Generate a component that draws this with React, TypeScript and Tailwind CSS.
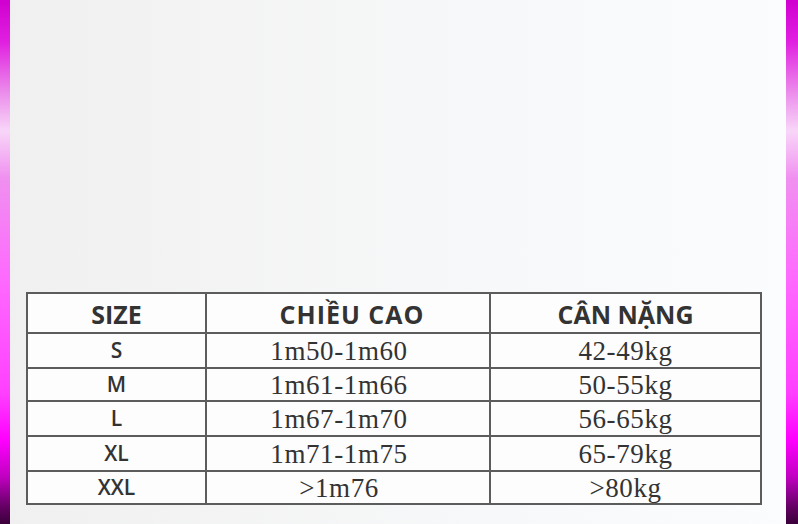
import React from "react";

const rows = [
  { s: "S", h: "1m50-1m60", w: "42-49kg", hh: "h-[33px]" },
  { s: "M", h: "1m61-1m66", w: "50-55kg", hh: "h-[31px]" },
  { s: "L", h: "1m67-1m70", w: "56-65kg", hh: "h-[33px]" },
  { s: "XL", h: "1m71-1m75", w: "65-79kg", hh: "h-[33px]" },
  { s: "XXL", h: ">1m76", w: ">80kg", hh: "h-[31px]" },
];

const barBg =
  "bg-[linear-gradient(to_bottom,#d000d0_0%,#e020e0_8%,#ec90ec_18%,#f8d6f8_25%,#f090f0_34%,#ff66ff_55%,#ff40ff_75%,#ff00ff_84%,#c000c0_91%,#600060_97%,#3a003a_100%)]";

export default function App() {
  return (
    <div className="flex w-[798px] h-[524px] overflow-hidden bg-[linear-gradient(to_right,#f0f0f0,#f7f8f9_60%,#fbfcfd)]">
      <div className={`w-[10px] h-full ${barBg}`} />
      <div className="flex-1 pl-[16px] pr-[24px] pt-[292px]">
        <div className="border-2 border-[#5c5c5c] bg-[#fdfdfd]">
          <div className="flex h-[38px] text-[#333] font-bold text-[25px] font-['Open_Sans',sans-serif] leading-none">
            <div className="w-[177px] flex items-center justify-center pt-[3px]">SIZE</div>
            <div className="w-[284px] border-l-2 border-[#5c5c5c] flex items-center justify-center pl-[8px] pt-[3px] tracking-[1px]">CHIỀU CAO</div>
            <div className="flex-1 border-l-2 border-[#5c5c5c] flex items-center justify-center pt-[3px]">CÂN NẶNG</div>
          </div>
          {rows.map((r) => (
            <div key={r.s} className={`flex ${r.hh} box-content border-t-2 border-[#5c5c5c] text-[#333] leading-none`}>
              <div className="w-[177px] flex items-center justify-center font-['Open_Sans',sans-serif] font-semibold text-[21px]">
                {r.s}
              </div>
              <div className="w-[284px] border-l-2 border-[#5c5c5c] flex items-center justify-center pr-[18px] pt-[2px] font-['Liberation_Serif',serif] text-[27px] tracking-[0.6px]">
                {r.h}
              </div>
              <div className="flex-1 border-l-2 border-[#5c5c5c] flex items-center justify-center pt-[2px] font-['Liberation_Serif',serif] text-[27px] tracking-[0.6px]">
                {r.w}
              </div>
            </div>
          ))}
        </div>
      </div>
      <div className={`w-[12px] h-full ${barBg}`} />
    </div>
  );
}
